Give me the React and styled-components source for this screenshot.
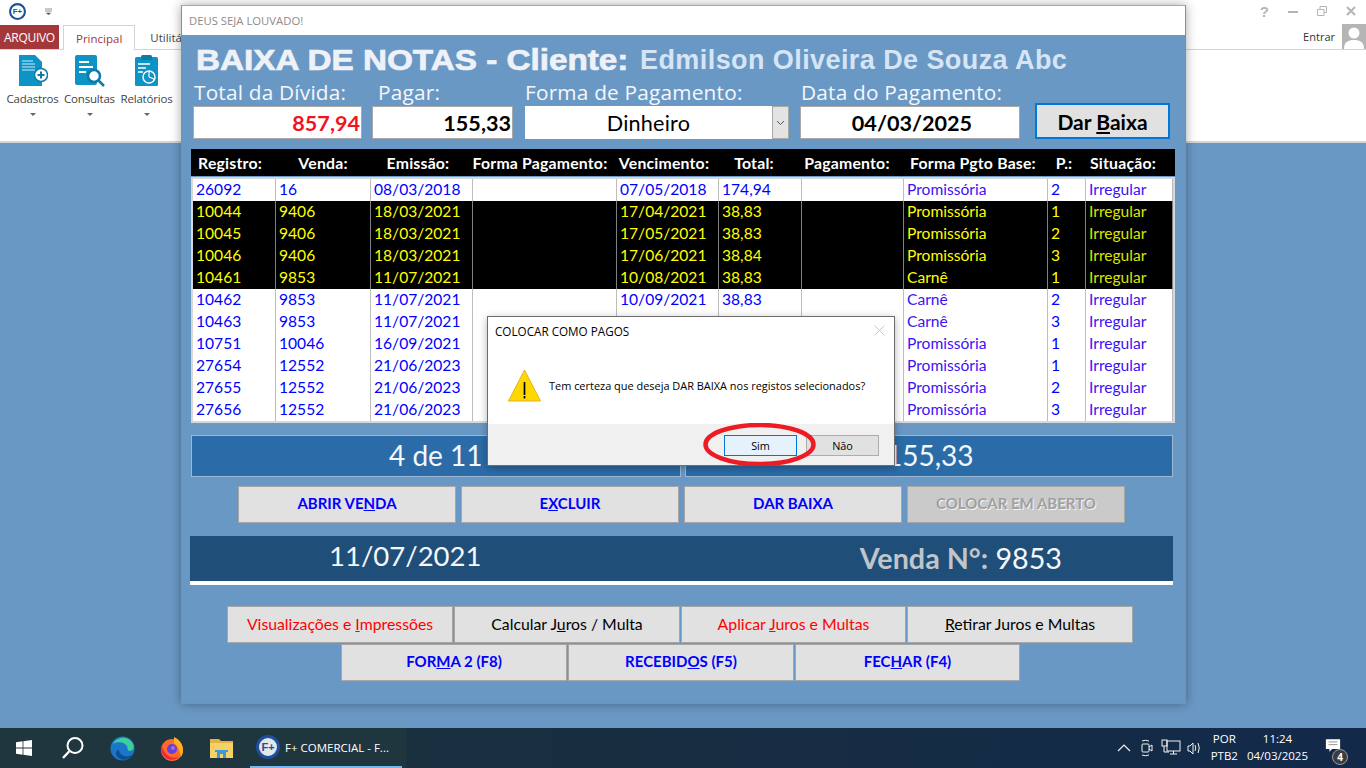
import React from 'react'
import styled, { createGlobalStyle } from 'styled-components'

const GlobalStyle = createGlobalStyle`
  html, body { margin: 0; padding: 0; }
  body {
    width: 1366px;
    height: 768px;
    overflow: hidden;
    background: #6a98c4;
    font-family: Lato, "Liberation Sans", sans-serif;
  }
  * { box-sizing: border-box; }
`

const COLUMNS = '83px 95px 102px 144px 102px 83px 102px 144px 38px 87px'
const HEADER_COLUMNS = '80px 106px 84px 160px 88px 92px 94px 158px 24px 94px'

const HEADERS = [
  'Registro:', 'Venda:', 'Emissão:', 'Forma Pagamento:', 'Vencimento:', 'Total:',
  'Pagamento:', 'Forma Pgto Base:', 'P.:', 'Situação:'
]

const ROWS = [
  ['26092', '16', '08/03/2018', '', '07/05/2018', '174,94', '', 'Promissória', '2', 'Irregular'],
  ['10044', '9406', '18/03/2021', '', '17/04/2021', '38,83', '', 'Promissória', '1', 'Irregular', true],
  ['10045', '9406', '18/03/2021', '', '17/05/2021', '38,83', '', 'Promissória', '2', 'Irregular', true],
  ['10046', '9406', '18/03/2021', '', '17/06/2021', '38,84', '', 'Promissória', '3', 'Irregular', true],
  ['10461', '9853', '11/07/2021', '', '10/08/2021', '38,83', '', 'Carnê', '1', 'Irregular', true],
  ['10462', '9853', '11/07/2021', '', '10/09/2021', '38,83', '', 'Carnê', '2', 'Irregular'],
  ['10463', '9853', '11/07/2021', '', '', '', '', 'Carnê', '3', 'Irregular'],
  ['10751', '10046', '16/09/2021', '', '', '', '', 'Promissória', '1', 'Irregular'],
  ['27654', '12552', '21/06/2023', '', '', '', '', 'Promissória', '1', 'Irregular'],
  ['27655', '12552', '21/06/2023', '', '', '', '', 'Promissória', '2', 'Irregular'],
  ['27656', '12552', '21/06/2023', '', '', '', '', 'Promissória', '3', 'Irregular']
]

const cellColor = (selected, index) => {
  if (selected) return index === 9 ? '#d8e400' : '#ffff00'
  return index === 7 || index === 9 ? '#3c12f5' : '#0000ff'
}

const Desktop = styled.div`
  position: relative;
  width: 1366px;
  height: 768px;
  display: flex;
  flex-direction: column;
`

const Ribbon = styled.header`
  height: 143px;
  background: #fff;
  border-bottom: 2px solid #d4d4d4;
  display: flex;
  flex-direction: column;
  flex: none;
`

const QuickBar = styled.div`
  height: 25px;
  padding: 0 0 3px 9px;
  display: flex;
  align-items: center;
  justify-content: space-between;
`

const QuickLeft = styled.div`
  display: flex;
  align-items: center;
  gap: 19px;
`

const WindowButtons = styled.div`
  display: flex;
  align-items: center;
  gap: 19px;
  padding-right: 10px;
  color: #b5b5b5;
`

const HelpMark = styled.span`
  font: bold 15px "Liberation Sans", sans-serif;
  color: #b5b5b5;
`

const TabRow = styled.div`
  height: 25px;
  display: flex;
  align-items: stretch;
  border-bottom: 1px solid #d4d4d4;
`

const FileTab = styled.div`
  width: 59px;
  background: #a4373a;
  color: #fff;
  font: 12px "Open Sans", sans-serif;
  display: flex;
  align-items: center;
  justify-content: center;
  letter-spacing: -0.3px;
`

const Tab = styled.div`
  padding: 0 12px;
  margin-left: ${p => (p.$active ? '4px' : '3px')};
  font: 11.5px "Open Sans", sans-serif;
  display: flex;
  align-items: center;
  color: ${p => (p.$active ? '#a4373a' : '#444')};
  background: #fff;
  border: ${p => (p.$active ? '1px solid #d4d4d4' : '0')};
  border-bottom: 0;
  height: ${p => (p.$active ? '25px' : '24px')};
`

const TabSpacer = styled.div`
  flex: 1;
`

const SignIn = styled.div`
  display: flex;
  align-items: flex-end;
  gap: 7px;
  margin-top: -1px;
  font: 11px "Open Sans", sans-serif;
  color: #333;
`

const SignInLabel = styled.span`
  padding-bottom: 5px;
`

const Tools = styled.div`
  display: flex;
  padding: 4px 0 0 5px;
  gap: 2px;
`

const Tool = styled.div`
  width: 55px;
  display: flex;
  flex-direction: column;
  align-items: center;
  font: 11.5px "Open Sans", sans-serif;
  color: #444;
  white-space: nowrap;
  letter-spacing: -0.2px;
`

const ToolCaret = styled.span`
  margin-top: 7px;
  width: 0;
  height: 0;
  border: 3px solid transparent;
  border-top: 3px solid #666;
  border-bottom: 0;
`

const ToolLabel = styled.span`
  margin-top: 5px;
  line-height: 14px;
`

const FormWindow = styled.section`
  position: absolute;
  left: 181px;
  top: 5px;
  width: 1005px;
  height: 699px;
  border: 1px solid #8c8c8c;
  border-top-color: #a8a8a8;
  background: #6a98c4;
  box-shadow: 0 0 10px rgba(0, 0, 0, 0.35);
  display: flex;
  flex-direction: column;
`

const FormTitle = styled.div`
  height: 29px;
  flex: none;
  background: #fff;
  padding-left: 7px;
  display: flex;
  align-items: center;
  font: 11.3px "Open Sans", sans-serif;
  color: #8f8a88;
`

const FormBody = styled.div`
  flex: 1;
  display: flex;
  flex-direction: column;
  padding: 0 11px 0 9px;
`

const Heading = styled.div`
  height: 46px;
  padding: 4px 0 0 5px;
  display: flex;
  align-items: center;
  gap: 12px;
  font-family: "Liberation Sans", sans-serif;
  font-weight: 700;
  white-space: nowrap;
`

/* the original title is a stretched bold face */
const HeadingTitle = styled.span`
  display: inline-block;
  margin-right: 55px;
  font-size: 29px;
  color: #eef2f8;
  -webkit-text-stroke: 0.7px #eef2f8;
  transform: scaleX(1.147);
  transform-origin: left center;
`

const HeadingClient = styled.span`
  font-size: 27px;
  letter-spacing: 0.42px;
  color: #d6e5f6;
`

const FieldRow = styled.div`
  display: flex;
  align-items: flex-end;
  padding-left: 2px;
  height: 58px;
`

const Field = styled.div`
  width: ${p => p.$w}px;
  margin-right: ${p => p.$gap}px;
  flex: none;
  display: flex;
  flex-direction: column;
`

const FieldLabel = styled.label`
  height: 25px;
  padding-left: ${p => p.$pad || 0}px;
  font: 20.8px/23px "Open Sans", sans-serif;
  color: #f4f7fb;
  letter-spacing: 0.2px;
  white-space: nowrap;
`

const FieldBox = styled.div`
  height: 33px;
  background: #fff;
  border: 1px solid #a9a9a9;
  padding: 0 1px 0 ${p => (p.$align ? '5px' : '1px')};
  display: flex;
  align-items: center;
  justify-content: ${p => p.$align || 'flex-end'};
  font: ${p => (p.$plain ? 400 : 700)} 21.6px Lato, sans-serif;
  color: ${p => p.$color || '#000'};
`

const ComboBox = styled(FieldBox)`
  border: 0;
  padding: 0;
  justify-content: space-between;
  align-items: stretch;
`

const ComboText = styled.span`
  flex: 1;
  display: flex;
  align-items: center;
  justify-content: center;
  letter-spacing: 0.2px;
`

const ComboArrow = styled.span`
  width: 17px;
  background: #e3e3e3;
  border: 1px solid #a9a9a9;
  display: flex;
  align-items: center;
  justify-content: center;
`

const PayButton = styled.button`
  width: 135px;
  height: 36px;
  background: #e1e1e1;
  border: 2px solid #0078d7;
  font: 700 21px Lato, sans-serif;
  color: #000;
  padding: 0;
`

const Grid = styled.div`
  margin-top: 10px;
  width: 984px;
  flex: none;
`

const HeaderRow = styled.div`
  height: 27px;
  background: #000;
  padding: 0 2px;
  display: grid;
  grid-template-columns: ${HEADER_COLUMNS};
  align-items: center;
`

const HeaderCell = styled.span`
  display: flex;
  justify-content: center;
  padding-right: 6px;
  font: 700 15.8px Lato, sans-serif;
  letter-spacing: 0.2px;
  color: #fff;
  white-space: nowrap;
`

const RowsBox = styled.div`
  margin-top: 1px;
  height: 246px;
  background: #fff;
  border: 2px solid #d7d7d7;
  overflow: hidden;
`

const DataRow = styled.div`
  height: 22px;
  display: grid;
  grid-template-columns: ${COLUMNS};
  background: ${p => (p.$selected ? '#000' : '#fff')};
`

const DataCell = styled.span`
  border-right: 1px solid ${p => (p.$selected ? '#808080' : '#bdbdbd')};
  padding-left: 3px;
  font: 15.6px/20px Lato, sans-serif;
  color: ${p => p.$color};
  white-space: nowrap;
`

const Summary = styled.div`
  margin-top: 12px;
  width: 982px;
  height: 42px;
  display: grid;
  grid-template-columns: 490px 488px;
  gap: 4px;
`

const SummaryCell = styled.div`
  background: #2b6ca8;
  border: 1px solid #9db8d4;
  color: #f4f7fb;
  font: 28px/38px Lato, sans-serif;
  padding-left: ${p => p.$left}px;
  white-space: nowrap;
`

const ActionRow = styled.div`
  margin-top: 9px;
  display: flex;
  gap: 5px;
  padding-left: ${p => p.$pad}px;
`

const ActionButton = styled.button`
  width: ${p => p.$w || 218}px;
  height: 37px;
  background: ${p => (p.$disabled ? '#cacaca' : '#e1e1e1')};
  border: 1px solid #a6a6a6;
  font: ${p => (p.$light ? '400 15.8px' : '700 15px')} Lato, sans-serif;
  color: ${p => p.$color || '#0000ff'};
  text-shadow: ${p => (p.$disabled ? '1px 1px 0 #f4f4f4' : 'none')};
  padding: 0 0 3px;
  white-space: nowrap;
`

const SaleBand = styled.div`
  margin: 13px 0 0 -1px;
  width: 983px;
  height: 45px;
  background: #1f4e79;
  display: flex;
  align-items: center;
  justify-content: space-between;
  color: #f4f7fb;
  padding: 0 111px 0 139px;
  white-space: nowrap;
`

const SaleDate = styled.span`
  font: 27.5px Lato, sans-serif;
  padding-bottom: 6px;
`

const SaleNumber = styled.span`
  font: 28.7px Lato, sans-serif;
  padding-bottom: 2px;
`

const SaleLabel = styled.b`
  color: #c0c5ca;
  font-weight: 700;
`

const WhiteLine = styled.div`
  margin-left: -1px;
  width: 983px;
  height: 4px;
  background: #fff;
`

const ButtonRows = styled.div`
  margin-top: 21px;
  display: flex;
  flex-direction: column;
  gap: 1px;
`

const BottomRow = styled.div`
  display: flex;
  gap: 1px;
  padding-left: ${p => p.$pad}px;
`

const Dialog = styled.section`
  position: absolute;
  left: 487px;
  top: 316px;
  width: 408px;
  height: 150px;
  background: #fff;
  border: 1px solid #6d6d6d;
  box-shadow: 0 2px 8px rgba(0, 0, 0, 0.3);
  display: flex;
  flex-direction: column;
  font: 10.95px "Open Sans", sans-serif;
  color: #000;
`

const DialogTitle = styled.div`
  height: 27px;
  padding: 0 9px 0 7px;
  display: flex;
  align-items: center;
  justify-content: space-between;
  font-size: 11.7px;
`

const DialogMain = styled.div`
  height: 80px;
  padding: 25px 0 0 20px;
  display: flex;
  gap: 8px;
`

const DialogText = styled.span`
  padding-top: 9px;
  white-space: nowrap;
`

const DialogFooter = styled.div`
  flex: 1;
  background: #f0f0f0;
  padding: 11px 15px 0 0;
  display: flex;
  justify-content: flex-end;
  gap: 9px;
`

const DialogButton = styled.button`
  position: relative;
  z-index: ${p => (p.$primary ? 1 : 0)};
  width: 73px;
  height: 21px;
  padding: 0;
  font: 10.85px "Open Sans", sans-serif;
  color: #000;
  background: ${p => (p.$primary ? '#e5f1fb' : '#e1e1e1')};
  border: 1px solid ${p => (p.$primary ? '#0078d7' : '#adadad')};
`

const RedEllipse = styled.svg`
  position: absolute;
  left: -22px;
  top: -13px;
  width: 113px;
  height: 43px;
  pointer-events: none;
`

const Taskbar = styled.footer`
  position: absolute;
  left: 0;
  bottom: 0;
  width: 1366px;
  height: 40px;
  background: linear-gradient(90deg, #20363f 0%, #20363f 29.7%, #19303f 29.8%, #12294a 100%);
  display: flex;
  align-items: stretch;
  color: #fff;
`

const TaskIcon = styled.div`
  width: ${p => p.$w || 50}px;
  display: flex;
  align-items: center;
  justify-content: center;
  flex: none;
`

const TaskApp = styled.div`
  width: 152px;
  margin-left: 5px;
  border-bottom: 2px solid #76b9ed;
  display: flex;
  align-items: center;
  gap: 5px;
  padding-left: 6px;
  font: 11.5px "Open Sans", sans-serif;
  white-space: nowrap;
`

const TraySpacer = styled.div`
  flex: 1;
`

const Tray = styled.div`
  display: flex;
  align-items: center;
  gap: 9px;
  padding-right: 17px;
  font: 11.5px/17px "Open Sans", sans-serif;
`

const TrayText = styled.div`
  text-align: center;
  white-space: nowrap;
  padding-bottom: 2px;
`

const NoteWrap = styled.div`
  position: relative;
  width: 24px;
  height: 24px;
  margin-left: 8px;
  padding-top: 2px;
`

const NoteBadge = styled.span`
  position: absolute;
  right: 1px;
  bottom: -5px;
  width: 16px;
  height: 16px;
  border-radius: 50%;
  background: #3c3c3c;
  border: 1px solid #999;
  font: 700 10px/14px "Open Sans", sans-serif;
  text-align: center;
`

const Underlined = styled.u``

const AppLogo = ({ size = 16, light }) => (
  <svg width={size} height={size} viewBox='0 0 24 24'>
    <circle cx='12' cy='12' r='10.5' fill={light ? '#e4e7ea' : '#fff'} stroke='#1c4fa0' strokeWidth='3' />
    <text x='12' y='16' textAnchor='middle' fontFamily='Liberation Sans' fontWeight='700' fontSize='11' fill='#1c4fa0'>F+</text>
  </svg>
)

const DocPlus = () => (
  <svg width='30' height='33' viewBox='0 0 30 33'>
    <path d='M1 1h16l7 7v24H1z' fill='#0e93c6' />
    <path d='M4 7h11M4 10h13M4 13h13M4 16h13' stroke='#cde9f4' strokeWidth='1.2' />
    <circle cx='23' cy='21' r='6.5' fill='#fff' stroke='#0e7ba6' strokeWidth='1.5' />
    <path d='M19.5 21h7M23 17.5v7' stroke='#0e7ba6' strokeWidth='2' />
  </svg>
)

const DocSearch = () => (
  <svg width='32' height='33' viewBox='0 0 32 33'>
    <rect x='1' y='1' width='22' height='30' rx='2' fill='#0e93c6' />
    <path d='M5 8h10M5 13h14M5 18h7' stroke='#fff' strokeWidth='2' />
    <circle cx='20' cy='22' r='6' fill='#fff' stroke='#0e7ba6' strokeWidth='2.5' />
    <path d='M24.5 26.5L30 32' stroke='#0e7ba6' strokeWidth='2.5' />
  </svg>
)

const Clipboard = () => (
  <svg width='26' height='33' viewBox='0 0 26 33'>
    <rect x='1' y='3' width='23' height='29' rx='1.5' fill='#0e93c6' />
    <rect x='7' y='1' width='11' height='5' rx='1.5' fill='#0e7ba6' />
    <path d='M4 10h12M4 14h8M4 18h5' stroke='#fff' strokeWidth='1.3' />
    <circle cx='15' cy='23' r='6' fill='#0e93c6' stroke='#fff' strokeWidth='1.4' />
    <path d='M15 23v-5M15 23l5 2' stroke='#fff' strokeWidth='1.2' />
  </svg>
)

const ComboChevron = () => (
  <svg width='9' height='6' viewBox='0 0 9 6'>
    <path d='M1 1l3.5 3.5L8 1' fill='none' stroke='#555' strokeWidth='1' />
  </svg>
)

const WarningIcon = () => (
  <svg width='33' height='33' viewBox='0 0 33 33'>
    <path d='M16.5 1L32.5 32H0.5z' fill='#ffd800' stroke='#e8b020' strokeWidth='1' />
    <path d='M16.5 13v13' stroke='#000' strokeWidth='1.7' />
    <path d='M16.5 27v2.5' stroke='#000' strokeWidth='1.7' />
  </svg>
)

const WindowsLogo = () => (
  <svg width='16' height='16' viewBox='0 0 16 16'>
    <path d='M0 2.2l6.6-.9v6.3H0zM7.4 1.2L16 0v7.6H7.4zM0 8.4h6.6v6.3L0 13.8zM7.4 8.4H16V16l-8.6-1.2z' fill='#fff' />
  </svg>
)

const SearchGlyph = () => (
  <svg width='24' height='24' viewBox='0 0 24 24'>
    <circle cx='14' cy='9.5' r='7.5' fill='none' stroke='#fff' strokeWidth='2' />
    <path d='M8.5 15L2 22' stroke='#fff' strokeWidth='2.4' />
  </svg>
)

const EdgeLogo = () => (
  <svg width='25' height='25' viewBox='0 0 25 25'>
    <circle cx='12.5' cy='12.5' r='12' fill='#1b76c9' />
    <path d='M3 8C6 1 17-1 22 6c3 4 2 9-2 9-3 0-2-3-3-5-2-4-10-5-14-2z' fill='#3ccf9a' />
    <path d='M6 17c0 5 6 8 12 6 2-1 4-2 5-5-3 3-8 3-11 1-2-1-3-3-3-5-2 0-3 1-3 3z' fill='#0c4f93' />
  </svg>
)

const FirefoxLogo = () => (
  <svg width='24' height='25' viewBox='0 0 24 25'>
    <circle cx='12' cy='14' r='11' fill='#ff6a2a' />
    <path d='M14 1c5 2 9 7 9 13 0 3-1 5-2 7-1-6-3-11-7-14z' fill='#ffb21f' />
    <path d='M2 9c1 8 8 15 17 12-3 3-9 4-13 1C2 19 0 13 2 9z' fill='#f0273f' />
    <circle cx='12' cy='13' r='5' fill='#6b3fd1' />
    <circle cx='13' cy='12' r='2' fill='#9a6ff0' />
  </svg>
)

const FolderLogo = () => (
  <svg width='23' height='19' viewBox='0 0 23 19'>
    <path d='M0 0h9l2 2h12v17H0z' fill='#e2b33f' />
    <rect y='4' width='23' height='15' fill='#f5d268' />
    <path d='M7 12h9v7h-3v-4h-3v4H7z' fill='#3a9bdc' />
    <rect x='5' y='11' width='13' height='2' fill='#3a9bdc' />
  </svg>
)

const TrayIcons = () => (
  <svg width='85' height='18' viewBox='0 0 85 18' fill='none' stroke='#f2f2f2'>
    <path d='M1 12l6-6 6 6' strokeWidth='1.2' />
    <rect x='25' y='5' width='7' height='8' rx='1' />
    <path d='M32 8l3-2v6l-3-2M25 2q3.500-1.500 7 0M25 16q3.500 1.500 7 0' />
    <rect x='50' y='2' width='13' height='10' />
    <rect x='45' y='1' width='5' height='6' />
    <path d='M53 15h7M56.500 12v3M47 7v6h5' />
    <path d='M71 7h2l3-3v11l-3-3h-2zM78 6q1.500 3 0 6M81 4q2.500 5 0 10' />
  </svg>
)

const Hotkey = ({ before, letter, after }) => (
  <>
    {before}
    <Underlined>{letter}</Underlined>
    {after}
  </>
)

export default function App () {
  return (
    <Desktop>
      <GlobalStyle />
      <Ribbon>
        <QuickBar>
          <QuickLeft>
            <AppLogo size={17} />
            <svg width='7' height='7' viewBox='0 0 7 7'>
              <path d='M0 1h7M0 3h7M1.500 5h4L3.500 7z' stroke='#666' fill='#666' strokeWidth='0.7' />
            </svg>
          </QuickLeft>
          <WindowButtons>
            <HelpMark>?</HelpMark>
            <svg width='10' height='10' viewBox='0 0 10 10'><path d='M0 6h10' stroke='#b5b5b5' strokeWidth='2' /></svg>
            <svg width='10' height='10' viewBox='0 0 10 10' fill='none' stroke='#b5b5b5'><path d='M.5 3.500h6.500v6H.5zM3 3.500V.5h6.500v6H7' /></svg>
            <svg width='10' height='10' viewBox='0 0 10 10'><path d='M1 1l8 8M9 1l-8 8' stroke='#b5b5b5' strokeWidth='2' /></svg>
          </WindowButtons>
        </QuickBar>
        <TabRow>
          <FileTab>ARQUIVO</FileTab>
          <Tab $active>Principal</Tab>
          <Tab>Utilitários</Tab>
          <TabSpacer />
          <SignIn>
            <SignInLabel>Entrar</SignInLabel>
            <svg width='24' height='25' viewBox='0 0 24 25'>
              <rect width='24' height='25' fill='#b5b5b5' />
              <circle cx='12' cy='9' r='5.500' fill='#fff' />
              <path d='M2 25c0-7 4-9 10-9s10 2 10 9z' fill='#fff' />
            </svg>
          </SignIn>
        </TabRow>
        <Tools>
          <Tool><DocPlus /><ToolLabel>Cadastros</ToolLabel><ToolCaret /></Tool>
          <Tool><DocSearch /><ToolLabel>Consultas</ToolLabel><ToolCaret /></Tool>
          <Tool><Clipboard /><ToolLabel>Relatórios</ToolLabel><ToolCaret /></Tool>
        </Tools>
      </Ribbon>

      <FormWindow>
        <FormTitle>DEUS SEJA LOUVADO!</FormTitle>
        <FormBody>
          <Heading>
            <HeadingTitle>BAIXA DE NOTAS - Cliente:</HeadingTitle>
            <HeadingClient>Edmilson Oliveira De Souza Abc</HeadingClient>
          </Heading>
          <FieldRow>
            <Field $w={169} $gap={10}>
              <FieldLabel $pad={1}>Total da Dívida:</FieldLabel>
              <FieldBox $color='#f01423'>857,94</FieldBox>
            </Field>
            <Field $w={141} $gap={12}>
              <FieldLabel $pad={6}>Pagar:</FieldLabel>
              <FieldBox>155,33</FieldBox>
            </Field>
            <Field $w={264} $gap={11}>
              <FieldLabel>Forma de Pagamento:</FieldLabel>
              <ComboBox $plain>
                <ComboText>Dinheiro</ComboText>
                <ComboArrow><ComboChevron /></ComboArrow>
              </ComboBox>
            </Field>
            <Field $w={220} $gap={15}>
              <FieldLabel $pad={1}>Data do Pagamento:</FieldLabel>
              <FieldBox $align='center'>04/03/2025</FieldBox>
            </Field>
            <PayButton>Dar <Underlined>B</Underlined>aixa</PayButton>
          </FieldRow>

          <Grid>
            <HeaderRow>
              {HEADERS.map(h => <HeaderCell key={h}>{h}</HeaderCell>)}
            </HeaderRow>
            <RowsBox>
              {ROWS.map(row => (
                <DataRow key={row[0]} $selected={row[10]}>
                  {row.slice(0, 10).map((cell, i) => (
                    <DataCell key={i} $selected={row[10]} $color={cellColor(row[10], i)}>{cell}</DataCell>
                  ))}
                </DataRow>
              ))}
            </RowsBox>
          </Grid>

          <Summary>
            <SummaryCell $left={197}>4 de 11</SummaryCell>
            <SummaryCell $left={200}>155,33</SummaryCell>
          </Summary>

          <ActionRow $pad={47}>
            <ActionButton><Hotkey before='ABRIR VE' letter='N' after='DA' /></ActionButton>
            <ActionButton><Hotkey before='E' letter='X' after='CLUIR' /></ActionButton>
            <ActionButton>DAR BAIXA</ActionButton>
            <ActionButton $disabled $color='#a0a0a0'>COLOCAR EM ABERTO</ActionButton>
          </ActionRow>

          <SaleBand>
            <SaleDate>11/07/2021</SaleDate>
            <SaleNumber><SaleLabel>Venda N°:</SaleLabel> 9853</SaleNumber>
          </SaleBand>
          <WhiteLine />

          <ButtonRows>
            <BottomRow $pad={36}>
              <ActionButton $w={226} $light $color='#ff0000'>
                <Hotkey before='Visualizações e ' letter='I' after='mpressões' />
              </ActionButton>
              <ActionButton $w={226} $light $color='#000'>
                <Hotkey before='Calcular J' letter='u' after='ros / Multa' />
              </ActionButton>
              <ActionButton $w={225} $light $color='#ff0000'>
                <Hotkey before='Aplicar ' letter='J' after='uros e Multas' />
              </ActionButton>
              <ActionButton $w={226} $light $color='#000'>
                <Hotkey before='' letter='R' after='etirar Juros e Multas' />
              </ActionButton>
            </BottomRow>
            <BottomRow $pad={150}>
              <ActionButton $w={226}><Hotkey before='FOR' letter='M' after='A 2 (F8)' /></ActionButton>
              <ActionButton $w={226}><Hotkey before='RECEBID' letter='O' after='S (F5)' /></ActionButton>
              <ActionButton $w={225}><Hotkey before='FEC' letter='H' after='AR (F4)' /></ActionButton>
            </BottomRow>
          </ButtonRows>
        </FormBody>
      </FormWindow>

      <Dialog>
        <DialogTitle>
          COLOCAR COMO PAGOS
          <svg width='11' height='11' viewBox='0 0 11 11'>
            <path d='M.5.5l10 10M10.500.5l-10 10' stroke='#c8c8c8' />
          </svg>
        </DialogTitle>
        <DialogMain>
          <WarningIcon />
          <DialogText>Tem certeza que deseja DAR BAIXA nos registos selecionados?</DialogText>
        </DialogMain>
        <DialogFooter>
          <DialogButton $primary>
            Sim
            <RedEllipse viewBox='0 0 113 43'>
              <ellipse cx='56.500' cy='21.500' rx='54' ry='19.500' fill='none' stroke='#ec1c24' strokeWidth='4.500' />
            </RedEllipse>
          </DialogButton>
          <DialogButton>Não</DialogButton>
        </DialogFooter>
      </Dialog>

      <Taskbar>
        <TaskIcon $w={48}><WindowsLogo /></TaskIcon>
        <TaskIcon $w={49}><SearchGlyph /></TaskIcon>
        <TaskIcon><EdgeLogo /></TaskIcon>
        <TaskIcon><FirefoxLogo /></TaskIcon>
        <TaskIcon $w={48}><FolderLogo /></TaskIcon>
        <TaskApp><AppLogo size={24} light />F+ COMERCIAL - F...</TaskApp>
        <TraySpacer />
        <Tray>
          <TrayIcons />
          <TrayText>POR<br />PTB2</TrayText>
          <TrayText>11:24<br />04/03/2025</TrayText>
          <NoteWrap>
            <svg width='16' height='15' viewBox='0 0 18 16'>
              <path d='M1 1h16v11H8l-3 3v-3H1z' fill='#fff' />
              <path d='M4 4h10M4 7h10' stroke='#888' />
            </svg>
            <NoteBadge>4</NoteBadge>
          </NoteWrap>
        </Tray>
      </Taskbar>
    </Desktop>
  )
}
